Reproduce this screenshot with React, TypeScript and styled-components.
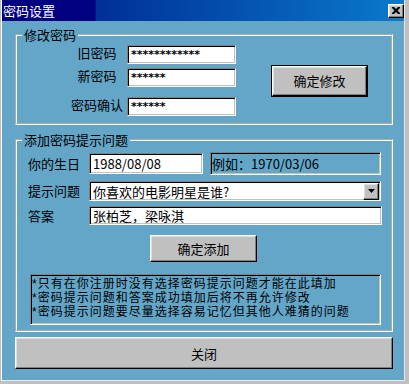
import React from 'react';
import styled, { createGlobalStyle, css } from 'styled-components';

const Global = createGlobalStyle`
  html, body { margin: 0; padding: 0; background: #ffffff; }
  body {
    font-family: "Noto Sans CJK SC", "Noto Sans", "DejaVu Sans", sans-serif;
    font-size: 13px;
    color: #000;
  }
  #root { width: 409px; height: 384px; }
`;

const raised = css`
  border: 1px solid;
  border-color: #ffffff #000000 #000000 #ffffff;
  box-shadow: inset -1px -1px 0 #808080, inset 1px 1px 0 #dfdfdf;
  background: #c0c0c0;
`;

const sunken = css`
  border: 1px solid;
  border-color: #808080 #ffffff #ffffff #808080;
  box-shadow: inset 1px 1px 0 #000000, inset -1px -1px 0 #c0c0c0;
`;

const Window = styled.div`
  width: 409px;
  height: 384px;
  box-sizing: border-box;
  border-left: 1px solid #c0c0c0;
  border-right: 4px solid #c0c0c0;
  border-bottom: 3px solid #c0c0c0;
  background: #c0c0c0;
`;

const Frame = styled.div`
  height: 100%;
  box-sizing: border-box;
  border-left: 1px solid #ffffff;
  border-right: 1px solid #e8e8e8;
  border-bottom: 1px solid #e8e8e8;
  display: flex;
  flex-direction: column;
  background: #63a6c8;
`;

const TitleBar = styled.div`
  height: 21px;
  flex: none;
  display: flex;
  align-items: center;
  justify-content: space-between;
  padding-left: 1px;
  background: linear-gradient(90deg, #000080 0px, #000080 93px, #002f98 94px, #0a7acc 100%);
`;

const TitleText = styled.span`
  color: #ffffff;
  font-size: 13px;
  line-height: 15px;
`;

const CloseBox = styled.div`
  ${raised};
  width: 16px;
  height: 14px;
  box-sizing: border-box;
  display: flex;
  align-items: center;
  justify-content: center;
`;

const Client = styled.div`
  flex: 1;
  display: flex;
  flex-direction: column;
  padding: 6px 11px 0 13px;
`;

const Group = styled.fieldset<{ $mt?: number; $pt: number; $pb: number }>`
  margin: ${p => p.$mt ?? 0}px 0 0 0;
  padding: ${p => p.$pt}px 0 ${p => p.$pb}px 5px;
  border: 2px groove #ffffff;
  min-width: 0;
`;

const Legend = styled.legend`
  padding: 0 2px;
  font-size: 13px;
  line-height: 15px;
`;

const ChangeBody = styled.div`
  display: flex;
  align-items: center;
  padding-left: 48px;
`;

const Fields = styled.div`
  display: flex;
  flex-direction: column;
`;

const PwRow = styled.div<{ $mt: number }>`
  display: flex;
  align-items: flex-start;
  gap: 3px;
  margin-top: ${p => p.$mt}px;
`;

const PwLabel = styled.span`
  width: 54px;
  text-align: center;
  line-height: 16px;
  white-space: nowrap;
`;

const TextBox = styled.div<{ $w: number; $h: number }>`
  ${sunken};
  box-sizing: border-box;
  width: ${p => p.$w}px;
  height: ${p => p.$h}px;
  background: #ffffff;
  display: flex;
  align-items: center;
  padding-left: 3px;
  line-height: 15px;
  white-space: nowrap;
  overflow: hidden;
`;

const Stars = styled.span`
  font-family: "DejaVu Sans", sans-serif;
  font-weight: bold;
  font-size: 11px;
`;

const Button = styled.div<{ $w: number; $h: number; $default?: boolean }>`
  ${raised};
  box-sizing: border-box;
  width: ${p => p.$w}px;
  height: ${p => p.$h}px;
  display: flex;
  align-items: center;
  justify-content: center;
  line-height: 15px;
  ${p => p.$default && css`
    box-shadow: 0 0 0 1px #000000, inset -1px -1px 0 #808080, inset 1px 1px 0 #dfdfdf;
  `}
`;

const SideButton = styled.div`
  margin-left: 36px;
`;

const HintBody = styled.div`
  display: flex;
  flex-direction: column;
`;

const HintRow = styled.div<{ $mt: number }>`
  display: flex;
  align-items: center;
  margin-top: ${p => p.$mt}px;
  padding-left: 6px;
`;

const HintLabel = styled.span`
  width: 61px;
  line-height: 16px;
  white-space: nowrap;
`;

const Example = styled.div`
  ${sunken};
  box-sizing: border-box;
  width: 171px;
  height: 23px;
  margin-left: 7px;
  display: flex;
  align-items: center;
  padding-left: 1px;
  line-height: 15px;
  white-space: nowrap;
`;

const SelectBox = styled(TextBox)`
  justify-content: space-between;
  padding-right: 1px;
`;

const DropButton = styled.div`
  ${raised};
  box-sizing: border-box;
  width: 16px;
  height: 17px;
  display: flex;
  align-items: center;
  justify-content: center;
`;

const AddRow = styled.div`
  margin-top: 10px;
  padding-left: 128px;
`;

const Notes = styled.div`
  ${sunken};
  box-sizing: border-box;
  width: 351px;
  height: 51px;
  margin: 12px 0 0 8px;
  padding: 2px 0 0 1px;
  display: flex;
  flex-direction: column;
`;

const NoteLine = styled.span`
  font-family: "Liberation Sans", "Noto Sans CJK SC", sans-serif;
  font-size: 12px;
  letter-spacing: 1px;
  line-height: 14px;
  height: 14px;
  white-space: nowrap;
`;

const CloseRow = styled.div`
  margin-top: 5px;
`;

const notes = [
  '*只有在你注册时没有选择密码提示问题才能在此填加',
  '*密码提示问题和答案成功填加后将不再允许修改',
  '*密码提示问题要尽量选择容易记忆但其他人难猜的问题',
];

export default function App() {
  return (
    <>
      <Global />
      <Window>
        <Frame>
          <TitleBar>
            <TitleText>密码设置</TitleText>
            <CloseBox>
              <svg width="8" height="7" viewBox="0 0 8 7">
                <path d="M0 0h2l2 2 2-2h2v1l-2.5 2.5L8 6v1H6L4 5 2 7H0V6l2.5-2.5L0 1z" fill="#000" />
              </svg>
            </CloseBox>
          </TitleBar>
          <Client>
            <Group $pt={3} $pb={7}>
              <Legend>修改密码</Legend>
              <ChangeBody>
                <Fields>
                  <PwRow $mt={0}>
                    <PwLabel>旧密码</PwLabel>
                    <TextBox $w={109} $h={19}><Stars>************</Stars></TextBox>
                  </PwRow>
                  <PwRow $mt={4}>
                    <PwLabel>新密码</PwLabel>
                    <TextBox $w={109} $h={19}><Stars>******</Stars></TextBox>
                  </PwRow>
                  <PwRow $mt={10}>
                    <PwLabel>密码确认</PwLabel>
                    <TextBox $w={109} $h={19}><Stars>******</Stars></TextBox>
                  </PwRow>
                </Fields>
                <SideButton>
                  <Button $w={95} $h={30} $default>确定修改</Button>
                </SideButton>
              </ChangeBody>
            </Group>
            <Group $mt={7} $pt={5} $pb={5}>
              <Legend>添加密码提示问题</Legend>
              <HintBody>
                <HintRow $mt={0}>
                  <HintLabel>你的生日</HintLabel>
                  <TextBox $w={114} $h={21}>1988/08/08</TextBox>
                  <Example>例如：1970/03/06</Example>
                </HintRow>
                <HintRow $mt={6}>
                  <HintLabel>提示问题</HintLabel>
                  <SelectBox $w={292} $h={20}>
                    <span>你喜欢的电影明星是谁?</span>
                    <DropButton>
                      <svg width="7" height="4" viewBox="0 0 7 4">
                        <path d="M0 0h7L3.5 4z" fill="#000" />
                      </svg>
                    </DropButton>
                  </SelectBox>
                </HintRow>
                <HintRow $mt={5}>
                  <HintLabel>答案</HintLabel>
                  <TextBox $w={293} $h={19}>张柏芝，梁咏淇</TextBox>
                </HintRow>
                <AddRow>
                  <Button $w={107} $h={27}>确定添加</Button>
                </AddRow>
                <Notes>
                  {notes.map(n => (
                    <NoteLine key={n}>{n}</NoteLine>
                  ))}
                </Notes>
              </HintBody>
            </Group>
            <CloseRow>
              <Button $w={378} $h={32}>关闭</Button>
            </CloseRow>
          </Client>
        </Frame>
      </Window>
    </>
  );
}
